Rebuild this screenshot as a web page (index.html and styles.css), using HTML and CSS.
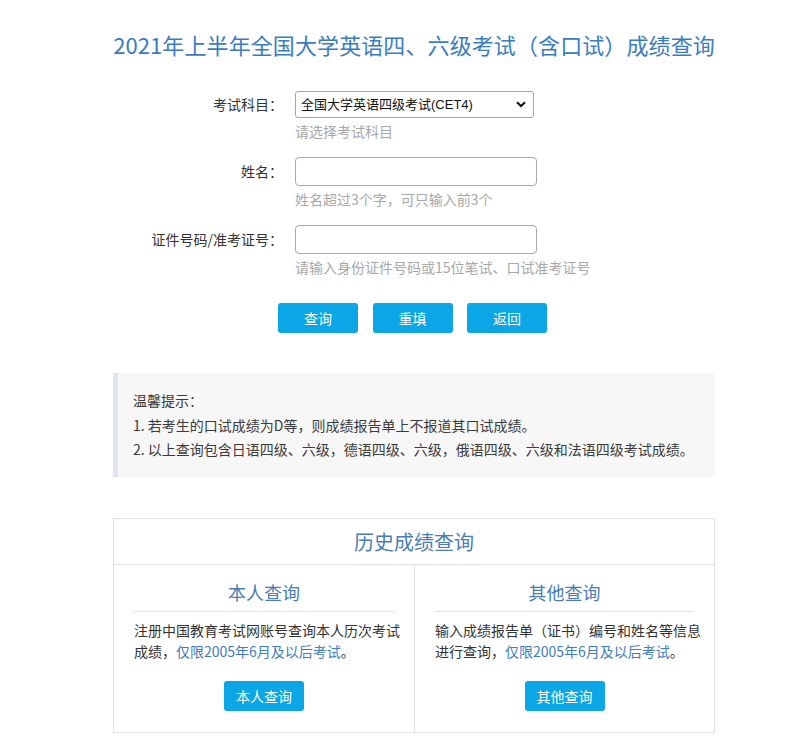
FILE: index.html
```html
<!DOCTYPE html>
<html lang="zh-CN">
<head>
<meta charset="utf-8">
<title>成绩查询</title>
<link rel="stylesheet" href="styles.css">
</head>
<body>
<div class="page">
  <h1 class="title">2021年上半年全国大学英语四、六级考试（含口试）成绩查询</h1>

  <form class="form">
    <div class="row">
      <label class="label">考试科目：</label>
      <div class="field">
        <div class="select-wrap">
          <select class="select">
            <option>全国大学英语四级考试(CET4)</option>
          </select>
          <svg class="chev" width="10" height="7" viewBox="0 0 10 7"><path d="M1 1.2 L5 5 L9 1.2" fill="none" stroke="#111" stroke-width="2"/></svg>
        </div>
        <div class="hint">请选择考试科目</div>
      </div>
    </div>
    <div class="row">
      <label class="label">姓名：</label>
      <div class="field">
        <input class="input" type="text">
        <div class="hint">姓名超过3个字，可只输入前3个</div>
      </div>
    </div>
    <div class="row">
      <label class="label">证件号码/准考证号：</label>
      <div class="field">
        <input class="input" type="text">
        <div class="hint">请输入身份证件号码或15位笔试、口试准考证号</div>
      </div>
    </div>
    <div class="buttons">
      <button type="button" class="btn">查询</button>
      <button type="button" class="btn">重填</button>
      <button type="button" class="btn">返回</button>
    </div>
  </form>

  <div class="tips">
    <p>温馨提示：</p>
    <p>1. 若考生的口试成绩为D等，则成绩报告单上不报道其口试成绩。</p>
    <p>2. 以上查询包含日语四级、六级，德语四级、六级，俄语四级、六级和法语四级考试成绩。</p>
  </div>

  <div class="history">
    <div class="history-head">历史成绩查询</div>
    <div class="history-cols">
      <div class="col">
        <div class="col-title">本人查询</div>
        <p class="col-text"><span class="line">注册中国教育考试网账号查询本人历次考试</span><span class="line">成绩，<span class="link">仅限2005年6月及以后考试</span>。</span></p>
        <div class="col-btn"><button type="button" class="btn">本人查询</button></div>
      </div>
      <div class="col col-right">
        <div class="col-title">其他查询</div>
        <p class="col-text"><span class="line">输入成绩报告单（证书）编号和姓名等信息</span><span class="line">进行查询，<span class="link">仅限2005年6月及以后考试</span>。</span></p>
        <div class="col-btn"><button type="button" class="btn">其他查询</button></div>
      </div>
    </div>
  </div>
</div>
</body>
</html>
```

FILE: styles.css
```css
* { box-sizing: border-box; }
html, body { margin: 0; padding: 0; background: #fff; }
body {
  font-family: "Noto Sans CJK SC", "Liberation Sans", sans-serif;
  color: #333;
  font-size: 14px;
}
.page {
  width: 602px;
  margin-left: 113px;
  padding-top: 29px;
  padding-bottom: 10px;
}
.title {
  margin: 0;
  font-size: 22px;
  font-weight: normal;
  color: #3a7cbf;
  line-height: 30px;
  text-align: center;
  white-space: nowrap;
  letter-spacing: 0.1px;
}
.form { margin-top: 32px; }
.row {
  display: grid;
  grid-template-columns: 170px 1fr;
  column-gap: 12px;
  margin-bottom: 16px;
}
.label {
  text-align: right;
  font-size: 14px;
  color: #333;
  line-height: 29px;
}
.row:first-child .label { line-height: 27px; }
.field { display: flex; flex-direction: column; align-items: flex-start; }
.select-wrap { position: relative; width: 239px; height: 27px; }
.select {
  appearance: none;
  -webkit-appearance: none;
  width: 239px;
  height: 27px;
  border: 1px solid #a6a6a6;
  border-radius: 3px;
  background: #fff;
  padding: 0 0 0 5px;
  font-family: "Liberation Sans", "Noto Sans CJK SC", sans-serif;
  font-size: 13px;
  color: #111;
  margin: 0;
}
.chev { position: absolute; right: 8px; top: 10px; pointer-events: none; }
.input {
  width: 242px;
  height: 29px;
  border: 1px solid #a9a9a9;
  border-radius: 4px;
  margin: 0;
  padding: 0 6px;
  background: #fff;
}
.hint {
  margin-top: 3px;
  font-size: 14px;
  line-height: 20px;
  color: #a8a8a8;
  white-space: nowrap;
}
.buttons {
  display: flex;
  justify-content: center;
  gap: 14.5px;
  margin-top: 26px;
  padding-right: 3px;
}
.btn {
  width: 80px;
  height: 30px;
  border: none;
  border-radius: 3px;
  background: #0aa6e6;
  color: #fff;
  font-family: "Noto Sans CJK SC", sans-serif;
  font-size: 14px;
  padding: 0;
  margin: 0;
}
.tips {
  margin-top: 40px;
  background: #f7f7f8;
  border-left: 5px solid #dfe5ee;
  padding: 15px 10px 15px 15px;
  font-size: 14px;
  color: #3a3a3a;
}
.tips p { margin: 0; line-height: 24.5px; white-space: nowrap; }
.history {
  margin-top: 41px;
  border: 1px solid #e0e0e0;
  width: 602px;
}
.history-head {
  height: 46px;
  line-height: 46px;
  text-align: center;
  font-size: 20px;
  color: #4a7db6;
  border-bottom: 1px solid #e0e0e0;
}
.history-cols { display: grid; grid-template-columns: 1fr 1fr; }
.col { padding: 12px 0 21px 0; }
.col-right { border-left: 1px solid #e0e0e0; }
.col-title {
  margin: 0 20px;
  text-align: center;
  font-size: 18px;
  line-height: 30px;
  color: #4a7db6;
  border-bottom: 1px solid #e3e3e3;
  padding-bottom: 4px;
}
.col-text {
  margin: 8px 6px 0 20px;
  font-size: 14px;
  line-height: 21px;
  color: #333;
}
.line { display: block; white-space: nowrap; }
.link { color: #3f7cc0; }
.col-btn { display: flex; justify-content: center; margin-top: 19px; }
```
